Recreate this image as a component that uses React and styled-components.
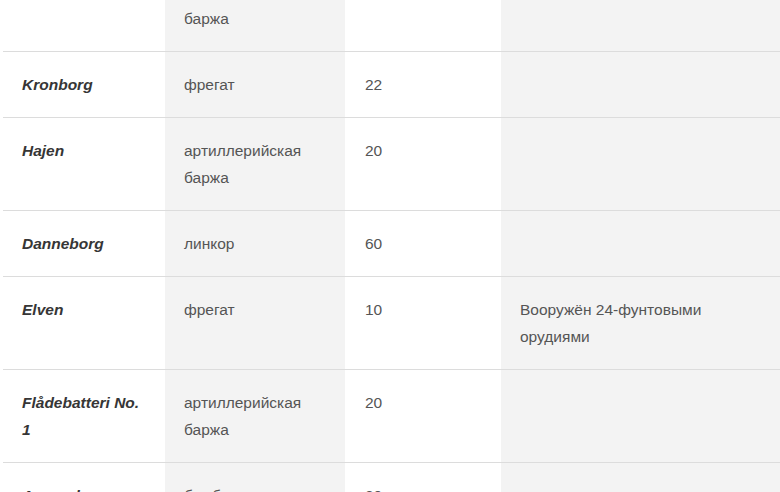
import React from 'react';
import styled, { createGlobalStyle } from 'styled-components';

const GlobalStyle = createGlobalStyle`
    html, body {
        margin: 0;
        padding: 0;
        background: #ffffff;
        overflow: hidden;
    }
`;

const Page = styled.div`
    height: 492px;
    overflow: hidden;
    padding-left: 3px;
    font-family: "Liberation Sans", Arial, sans-serif;
`;

// the table is scrolled: the first row starts above the window
const Table = styled.table`
    width: 777px;
    margin-top: -41px;
    border-collapse: collapse;
    table-layout: fixed;
    font-size: 15.5px;
    line-height: 27px;
    color: #555555;
`;

const Col = styled.col`
    width: ${(p) => p.$width}px;
    background: ${(p) => (p.$shaded ? '#f3f3f3' : '#ffffff')};
`;

const Row = styled.tr`
    border-bottom: 1px solid #dcdcdc;
`;

const Cell = styled.td`
    padding: 19px 19px 19px ${(p) => p.$indent || 19}px;
    vertical-align: top;
    text-align: left;
    overflow-wrap: break-word;
`;

const Name = styled(Cell)`
    font-weight: bold;
    font-style: italic;
    color: #363636;
`;

const ships = [
    { name: 'Suersen', type: 'артиллерийская баржа', guns: 18, note: '' },
    { name: 'Kronborg', type: 'фрегат', guns: 22, note: '' },
    { name: 'Hajen', type: 'артиллерийская баржа', guns: 20, note: '' },
    { name: 'Danneborg', type: 'линкор', guns: 60, note: '' },
    { name: 'Elven', type: 'фрегат', guns: 10, note: 'Вооружён 24-фунтовыми орудиями' },
    { name: 'Flådebatteri No. 1', type: 'артиллерийская баржа', guns: 20, note: '' },
    { name: 'Aggershus', type: 'бомбардирская баржа', guns: 20, note: '' },
];

function App() {
    return (
        <Page>
            <GlobalStyle />
            <Table>
                <colgroup>
                    <Col $width={162} />
                    <Col $width={180} $shaded />
                    <Col $width={156} />
                    <Col $width={279} $shaded />
                </colgroup>
                <tbody>
                    {ships.map((ship) => (
                        <Row key={ship.name}>
                            <Name>{ship.name}</Name>
                            <Cell>{ship.type}</Cell>
                            <Cell $indent={20}>{ship.guns}</Cell>
                            <Cell>{ship.note}</Cell>
                        </Row>
                    ))}
                </tbody>
            </Table>
        </Page>
    );
}

export default App;
